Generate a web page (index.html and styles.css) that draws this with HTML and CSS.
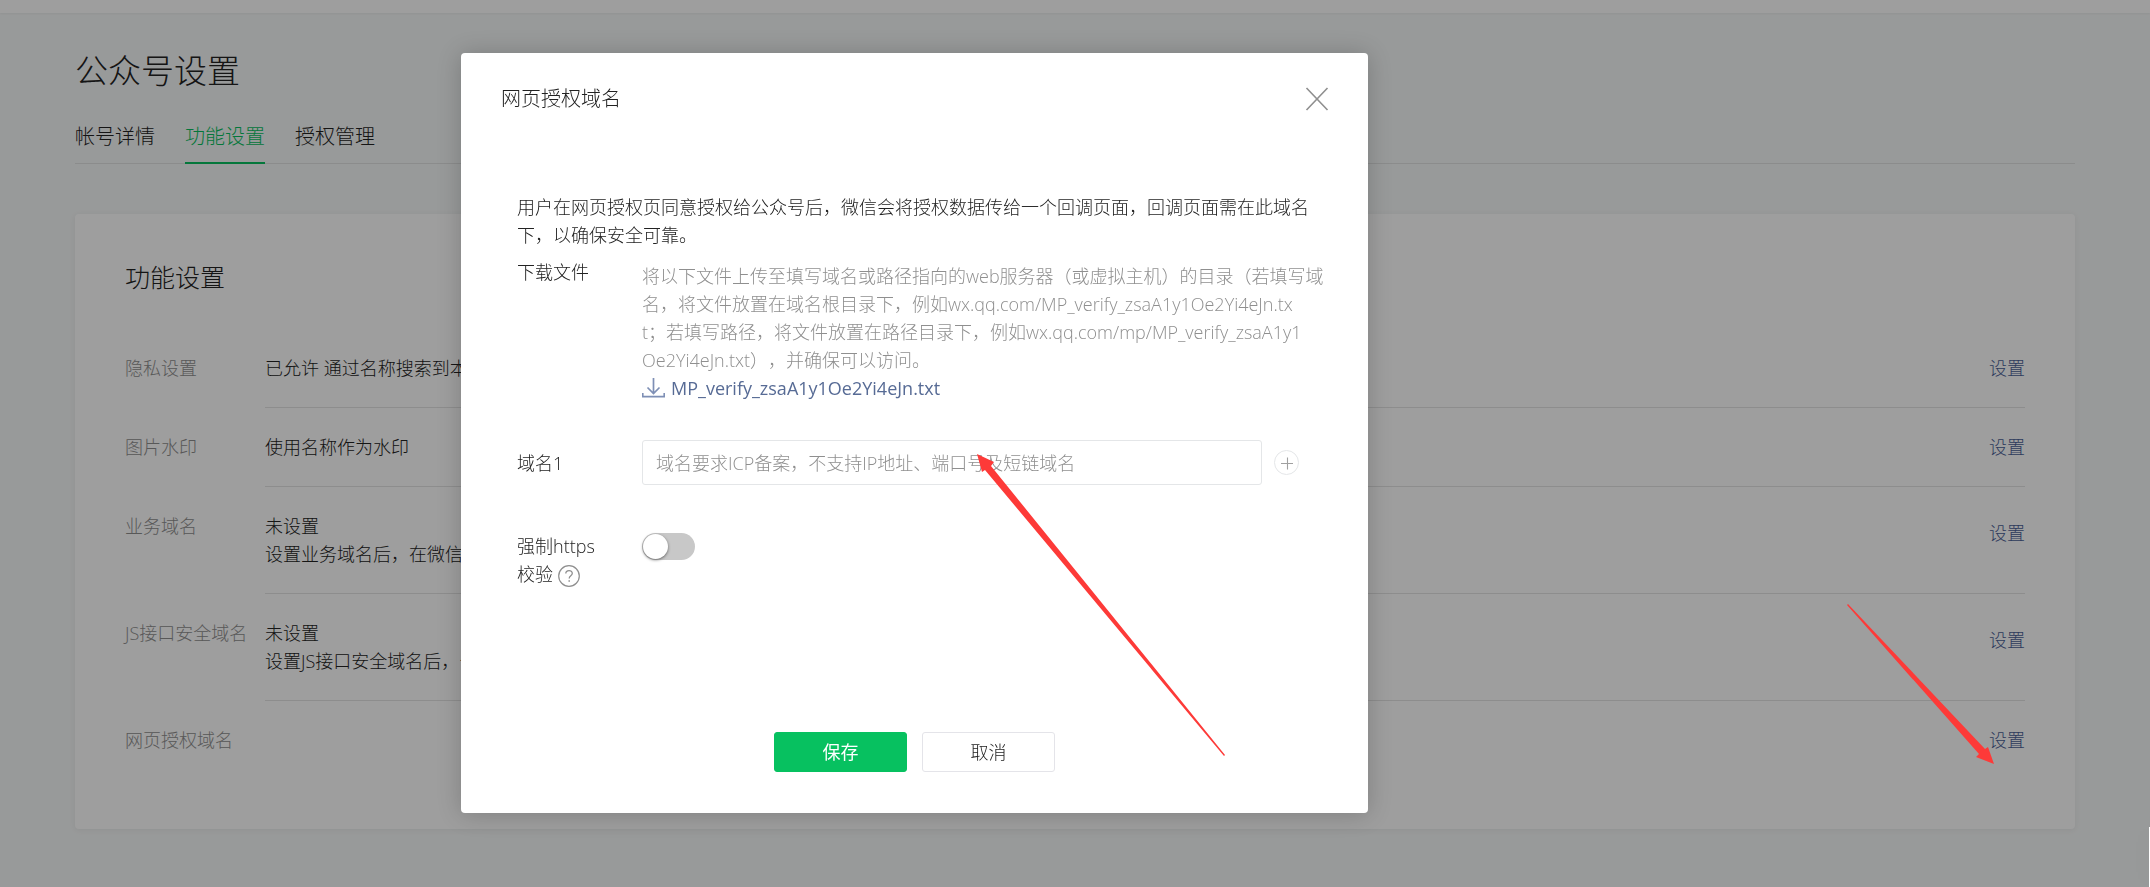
FILE: index.html
```html
<!DOCTYPE html>
<html lang="zh-CN">
<head>
    <meta charset="utf-8">
    <title>公众号设置</title>
    <link rel="stylesheet" href="styles.css">
</head>
<body>
    <div class="topbar"></div>
    <main class="page">
        <h1 class="page-title">公众号设置</h1>
        <nav class="tabs">
            <a class="tab" href="#">帐号详情</a>
            <a class="tab active" href="#">功能设置</a>
            <a class="tab" href="#">授权管理</a>
        </nav>

        <section class="card">
            <h2 class="card-title">功能设置</h2>
            <div class="row">
                <div class="row-label">隐私设置</div>
                <div class="row-body">
                    <div>已允许 通过名称搜索到本</div>
                    <a class="link" href="#">设置</a>
                </div>
            </div>
            <div class="row">
                <div class="row-label">图片水印</div>
                <div class="row-body">
                    <div>使用名称作为水印</div>
                    <a class="link" href="#">设置</a>
                </div>
            </div>
            <div class="row tall">
                <div class="row-label">业务域名</div>
                <div class="row-body">
                    <div>未设置<br>设置业务域名后，在微信内</div>
                    <a class="link" href="#">设置</a>
                </div>
            </div>
            <div class="row tall">
                <div class="row-label">JS接口安全域名</div>
                <div class="row-body">
                    <div>未设置<br>设置JS接口安全域名后，公</div>
                    <a class="link" href="#">设置</a>
                </div>
            </div>
            <div class="row">
                <div class="row-label">网页授权域名</div>
                <div class="row-body">
                    <div></div>
                    <a class="link" href="#">设置</a>
                </div>
            </div>
        </section>
    </main>

    <div class="mask"></div>
    <div class="side-panel"></div>

    <div class="dialog" role="dialog" aria-labelledby="dialog-title">
        <div class="dialog-header">
            <h3 id="dialog-title">网页授权域名</h3>
            <button class="close-btn" type="button" aria-label="关闭">
                <svg width="24" height="24" viewBox="0 0 24 24"><path d="M1.5 1l21 22M22.5 1l-21 22" fill="none" stroke="#8f8f8f" stroke-width="1.6"/></svg>
            </button>
        </div>

        <form class="dialog-body">
            <p class="intro">用户在网页授权页同意授权给公众号后，微信会将授权数据传给一个回调页面，回调页面需在此域名<br>下，以确保安全可靠。</p>

            <div class="field">
                <div class="field-label">下载文件</div>
                <div class="field-main download">
                    <p class="desc">将以下文件上传至填写域名或路径指向的web服务器（或虚拟主机）的目录（若填写域<br>名，将文件放置在域名根目录下，例如wx.qq.com/MP_verify_zsaA1y1Oe2Yi4eJn.tx<br>t；若填写路径，将文件放置在路径目录下，例如wx.qq.com/mp/MP_verify_zsaA1y1<br>Oe2Yi4eJn.txt），并确保可以访问。</p>
                    <a class="file-link" href="#">
                        <svg width="23" height="20" viewBox="0 0 23 20" fill="none" stroke="#7e8fb5"><path d="M11.5 0v15M5.5 9.5l6 6 6-6" stroke-width="1.7"/><path d="M.8 15v3.6h21.4V15" stroke-width="1.6"/></svg>
                        <span>MP_verify_zsaA1y1Oe2Yi4eJn.txt</span>
                    </a>
                </div>
            </div>

            <div class="field field-domain">
                <label class="field-label" for="domain">域名1</label>
                <input class="text-input" id="domain" type="text" placeholder="域名要求ICP备案，不支持IP地址、端口号及短链域名">
                <button class="add-btn" type="button" aria-label="添加">
                    <svg width="25" height="25" viewBox="0 0 25 25" fill="none"><circle cx="12.5" cy="12.5" r="12" stroke="#e4e6e8"/><path d="M7 13.5h12M13.5 7.5v12" stroke="#a0a0a0" stroke-width="1.1"/></svg>
                </button>
            </div>

            <div class="field field-https">
                <label class="field-label" for="https">强制https<br>校验
                    <svg class="help" width="22" height="22" viewBox="0 0 22 22" fill="none" stroke="#8f8f8f"><circle cx="11" cy="11" r="10.3" stroke-width="1.2"/><path d="M7.8 8.6c0-4 6.5-4 6.5-.3 0 2.5-3.1 2.4-3.1 5.1" stroke-width="1.3"/><path d="M11.2 15.2v1.6" stroke-width="1.5"/></svg>
                </label>
                <input class="switch" id="https" type="checkbox">
            </div>

            <div class="dialog-footer">
                <button class="btn primary" type="button">保存</button>
                <button class="btn" type="button">取消</button>
            </div>
        </form>
    </div>

    <svg class="arrows" width="100%" height="100%" fill="#fd3a38">
        <path d="M977 454l17 8-3 4 234 289-1 1-239-286-3 2z"/>
        <path d="M1994 764l-18-7 3-3-132-149 1-1 137 145 3-2z"/>
    </svg>
</body>
</html>
```
FILE: styles.css
```css
* {
    box-sizing: border-box;
}
body {
    margin: 0;
    min-height: 100vh;
    background: #f6f8f8;
    color: #222;
    font-family: "Open Sans", "Noto Sans CJK SC", sans-serif;
    font-size: 18px;
    font-weight: 300;
    line-height: 28px;
    text-spacing-trim: space-all;
    overflow: hidden;
}
h1, h2, h3, p {
    margin: 0;
    font-weight: 300;
}
a {
    text-decoration: none;
}
button, input {
    font: inherit;
}
button {
    padding: 0;
    border: none;
    background: none;
    cursor: pointer;
}
svg {
    display: block;
}

/* page behind the dialog */
.topbar {
    height: 13px;
    background: #fff;
    box-shadow: 0 1px 2px rgba(0,0,0,0.05);
}
.page {
    padding: 34px 75px 58px;
}
.page-title {
    font-size: 33px;
    line-height: 48px;
}
.tabs {
    display: flex;
    gap: 30px;
    margin-top: 23px;
    border-bottom: 1px solid #e0e2e2;
}
.tab {
    margin-bottom: -1px;
    padding: 5px 0 11px;
    border-bottom: 2px solid transparent;
    color: #222;
    font-size: 20px;
}
.tab.active {
    border-color: #07c160;
    color: #07c160;
}
.card {
    margin-top: 50px;
    padding: 43px 50px 50px;
    border-radius: 4px;
    background: #fff;
    box-shadow: 0 1px 6px rgba(0,0,20,0.06);
}
.card-title {
    margin-bottom: 32px;
    font-size: 25px;
    line-height: 40px;
}
.row {
    display: flex;
}
.row-label {
    width: 140px;
    padding: 25px 0;
    color: #8f8f8f;
}
.row-body {
    flex: 1;
    display: flex;
    justify-content: space-between;
    padding: 25px 0;
    border-bottom: 1px solid #e4e4e4;
}
.row:last-child .row-body {
    border-bottom: none;
}
.link {
    color: #4a6096;
}
.tall .link {
    padding-top: 7px;
}

.mask {
    position: fixed;
    inset: 0;
    background: rgba(0,0,0,0.38);
}
.side-panel {
    position: fixed;
    right: 0;
    bottom: 0;
    width: 1px;
    height: 60px;
    background: #fff;
    box-shadow: 0 0 24px rgba(0,0,0,0.2);
}

/* dialog */
.dialog {
    position: absolute;
    top: 53px;
    left: 461px;
    display: flex;
    flex-direction: column;
    width: 907px;
    min-height: 760px;
    border-radius: 4px;
    background: #fff;
    box-shadow: 0 1px 25px rgba(0,0,0,0.2);
}
.dialog-header {
    display: flex;
    justify-content: space-between;
    align-items: center;
    padding: 32px 39px 30px 40px;
}
.dialog-header h3 {
    font-size: 20px;
}
.dialog-body {
    flex: 1;
    display: flex;
    flex-direction: column;
    padding: 50px 30px 41px 56px;
}
.field {
    display: flex;
    margin-top: 9px;
}
.field-label {
    width: 125px;
}
.field-main {
    flex: 1;
}
.download {
    padding-top: 4px;
}
.desc {
    color: #8f8f8f;
}
.file-link {
    display: flex;
    align-items: center;
    gap: 6px;
    color: #576b95;
    font-weight: 400;
}
.field-domain {
    align-items: center;
    margin-top: 38px;
}
.text-input {
    width: 620px;
    height: 45px;
    padding: 0 13px;
    border: 1px solid #e4e6e8;
    border-radius: 3px;
}
.text-input::placeholder {
    color: #8f8f8f;
}
.add-btn {
    margin-left: 12px;
}
.field-https {
    margin-top: 47px;
}
.help {
    display: inline-block;
    vertical-align: middle;
}
.switch {
    appearance: none;
    width: 53px;
    height: 27px;
    margin: 1px 0 0;
    border-radius: 14px;
    background: #c8c8c8;
}
.switch::before {
    content: "";
    display: block;
    width: 25px;
    height: 25px;
    margin: 1px;
    border-radius: 50%;
    background: #fff;
    box-shadow: 0 1px 3px rgba(0,0,0,0.5);
}
.dialog-footer {
    display: flex;
    justify-content: center;
    gap: 15px;
    margin-top: auto;
    padding-right: 26px;
}
.btn {
    width: 133px;
    height: 40px;
    border: 1px solid #e4e4e9;
    border-radius: 3px;
    color: #222;
}
.btn.primary {
    border-color: #07c160;
    background: #07c160;
    color: #fff;
    font-weight: 400;
}

.arrows {
    position: fixed;
    inset: 0;
    pointer-events: none;
}
```
